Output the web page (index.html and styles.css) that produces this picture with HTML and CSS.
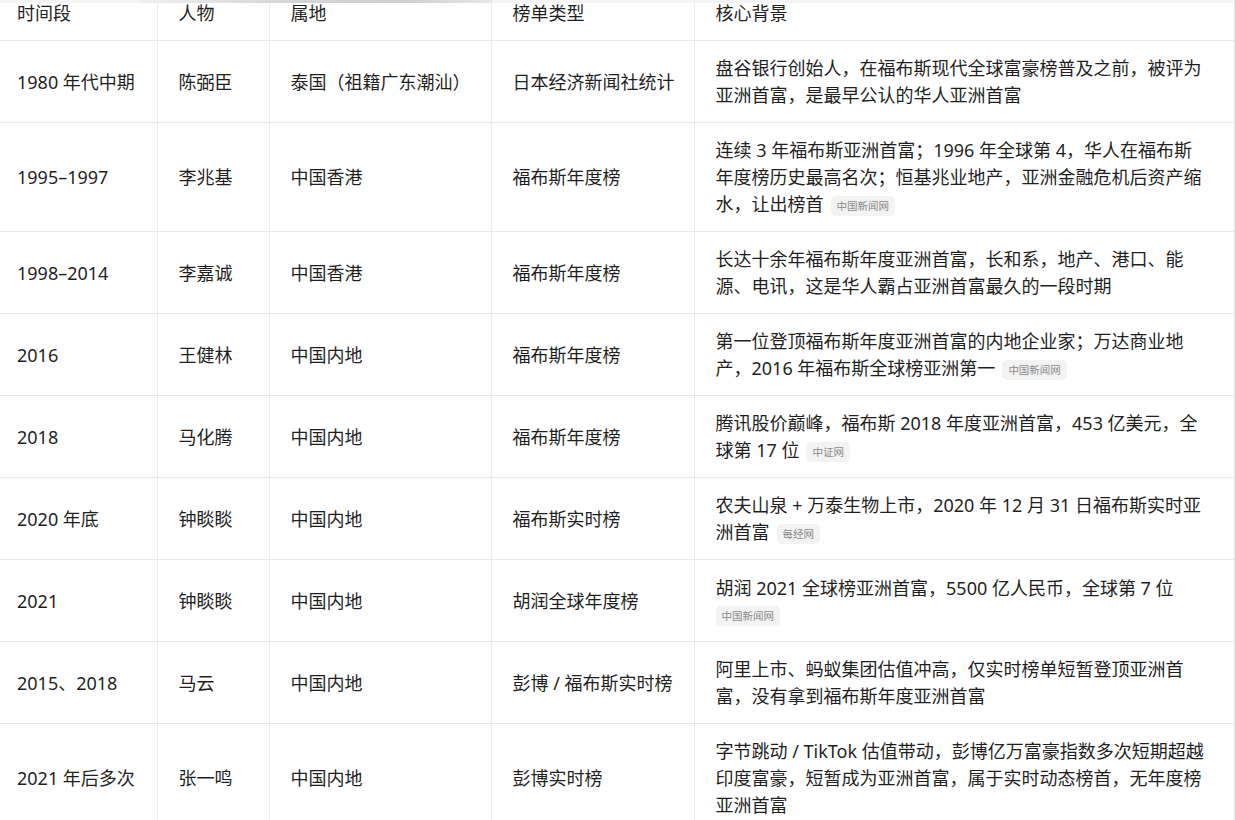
FILE: index.html
```html
<!DOCTYPE html>
<html lang="zh-CN">
<head>
<meta charset="utf-8">
<title>亚洲首富</title>
<link rel="stylesheet" href="styles.css">
</head>
<body>
<div class="scroll-shade"><div class="shade-thumb"></div></div>
<div class="wrap">
<table class="rich">
<colgroup>
<col class="c1"><col class="c2"><col class="c3"><col class="c4"><col class="c5">
</colgroup>
<thead>
<tr><th>时间段</th><th>人物</th><th>属地</th><th>榜单类型</th><th>核心背景</th></tr>
</thead>
<tbody>
<tr><td>1980 年代中期</td><td>陈弼臣</td><td>泰国（祖籍广东潮汕）</td><td>日本经济新闻社统计</td><td>盘谷银行创始人，在福布斯现代全球富豪榜普及之前，被评为亚洲首富，是最早公认的华人亚洲首富</td></tr>
<tr><td>1995–1997</td><td>李兆基</td><td>中国香港</td><td>福布斯年度榜</td><td>连续 3 年福布斯亚洲首富；1996 年全球第 4，华人在福布斯年度榜历史最高名次；恒基兆业地产，亚洲金融危机后资产缩水，让出榜首<span class="src">中国新闻网</span></td></tr>
<tr><td>1998–2014</td><td>李嘉诚</td><td>中国香港</td><td>福布斯年度榜</td><td>长达十余年福布斯年度亚洲首富，长和系，地产、港口、能源、电讯，这是华人霸占亚洲首富最久的一段时期</td></tr>
<tr><td>2016</td><td>王健林</td><td>中国内地</td><td>福布斯年度榜</td><td>第一位登顶福布斯年度亚洲首富的内地企业家；万达商业地产，2016 年福布斯全球榜亚洲第一<span class="src">中国新闻网</span></td></tr>
<tr><td>2018</td><td>马化腾</td><td>中国内地</td><td>福布斯年度榜</td><td>腾讯股价巅峰，福布斯 2018 年度亚洲首富，453 亿美元，全球第 17 位<span class="src">中证网</span></td></tr>
<tr><td>2020 年底</td><td>钟睒睒</td><td>中国内地</td><td>福布斯实时榜</td><td>农夫山泉 + 万泰生物上市，2020 年 12 月 31 日福布斯实时亚洲首富<span class="src">每经网</span></td></tr>
<tr><td>2021</td><td>钟睒睒</td><td>中国内地</td><td>胡润全球年度榜</td><td>胡润 2021 全球榜亚洲首富，5500 亿人民币，全球第 7 位<span class="src src-wrap">中国新闻网</span></td></tr>
<tr><td>2015、2018</td><td>马云</td><td>中国内地</td><td>彭博 / 福布斯实时榜</td><td>阿里上市、蚂蚁集团估值冲高，仅实时榜单短暂登顶亚洲首富，没有拿到福布斯年度亚洲首富</td></tr>
<tr><td>2021 年后多次</td><td>张一鸣</td><td>中国内地</td><td>彭博实时榜</td><td>字节跳动 / TikTok 估值带动，彭博亿万富豪指数多次短期超越印度富豪，短暂成为亚洲首富，属于实时动态榜首，无年度榜亚洲首富</td></tr>
</tbody>
</table>
</div>
</body>
</html>
```

FILE: styles.css
```css
html, body {
  margin: 0;
  padding: 0;
  background: #ffffff;
  overflow: hidden;
}

body {
  font-family: "Noto Sans", "Noto Sans CJK SC", sans-serif;
  color: #1f1f1f;
  font-size: 18px;
  line-height: 27px;
  position: relative;
}

.scroll-shade {
  position: absolute;
  top: 0;
  left: 0;
  width: 1233px;
  height: 3px;
  background: #f4f4f4;
  z-index: 2;
}

.shade-thumb {
  margin-left: 140px;
  width: 352px;
  height: 3px;
  background: linear-gradient(90deg, #f0f0f0 0%, #d6d6d6 40%, #cfcfcf 75%, #e6e6e6 100%);
  border-radius: 0 0 2px 2px;
}

.wrap {
  margin-top: -14px;
  margin-left: -4px;
  width: 1238px;
}

.rich {
  border-collapse: collapse;
  table-layout: fixed;
  width: 1238px;
  border-right: 1px solid #e6e6e6;
}

.c1 { width: 161px; }
.c2 { width: 112px; }
.c3 { width: 222px; }
.c4 { width: 203px; }
.c5 { width: 540px; }

.rich th,
.rich td {
  padding: 14px 12px 13px 21px;
  text-align: left;
  vertical-align: middle;
  border-bottom: 1px solid #e8e8e8;
  border-left: 1px solid #ececec;
  font-weight: 400;
}

.rich th:last-child,
.rich td:last-child {
  padding-right: 26px;
}

.rich th:first-child,
.rich td:first-child {
  border-left: none;
}

.rich td {
  height: 54px;
}

.src {
  display: inline-block;
  margin-left: 7px;
  padding: 0 6px;
  height: 20px;
  line-height: 20px;
  font-size: 10.5px;
  color: #8a8a8a;
  background: #f3f3f3;
  border-radius: 5px;
  vertical-align: 1px;
}

.src-wrap {
  display: block;
  width: max-content;
  margin: 4px 0 2px 0;
}
```
